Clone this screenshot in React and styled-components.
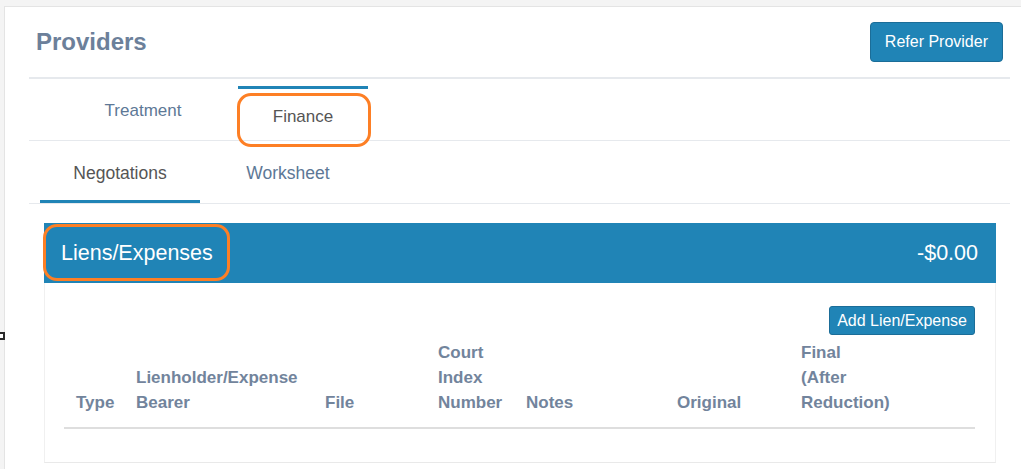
import React from "react";
import styled, { createGlobalStyle, css } from "styled-components";

const GlobalStyle = createGlobalStyle`
  html, body {
    margin: 0;
    padding: 0;
    background: #f4f4f4;
    font-family: "Liberation Sans", Arial, sans-serif;
  }
  * { box-sizing: border-box; }
`;

const Page = styled.div`
  position: relative;
  width: 1021px;
  height: 469px;
  overflow: hidden;
  padding: 6px 0 0 4px;
`;

const Panel = styled.div`
  background: #ffffff;
  border-left: 1px solid #e4e4e4;
  border-top: 1px solid #e4e4e4;
  height: 463px;
`;

const Container = styled.div`
  margin-left: 24px;
  width: 981px;
`;

const Header = styled.div`
  height: 72px;
  display: flex;
  align-items: center;
  justify-content: space-between;
  padding: 0 7px;
  border-bottom: 2px solid #e6e9ed;
`;

const Title = styled.h2`
  margin: 0;
  font-size: 24px;
  font-weight: 700;
  color: #6c809a;
`;

const PrimaryButton = styled.button`
  font-family: inherit;
  color: #ffffff;
  background: #2084b6;
  border: 1px solid #1b6d98;
  border-radius: ${(p) => (p.$small ? "3px" : "4px")};
  font-size: 16px;
  height: ${(p) => (p.$small ? "29px" : "40px")};
  padding: ${(p) => (p.$small ? "0 7px" : "0 14px")};
  cursor: pointer;
  line-height: 1;
`;

const TopTabs = styled.div`
  height: 62px;
  display: flex;
  gap: 30px;
  padding-left: 49px;
  border-bottom: 1px solid #e6e9ed;
`;

const TopTab = styled.div`
  position: relative;
  width: 130px;
  display: flex;
  align-items: center;
  justify-content: center;
  font-size: 17px;
  padding-top: 2px;
  color: #5d7896;
  ${(p) =>
    p.$active &&
    css`
      margin-top: 7px;
      border-top: 3px solid #2084b6;
      color: #555555;
      padding-top: 4px;
    `}
`;

const SubTabs = styled.div`
  height: 63px;
  display: flex;
  gap: 8px;
  padding-left: 11px;
  border-bottom: 1px solid #e6e9ed;
`;

const SubTab = styled.div`
  width: 160px;
  display: flex;
  align-items: center;
  justify-content: center;
  padding-top: 5px;
  font-size: 17.5px;
  color: ${(p) => (p.$active ? "#555555" : "#5d7896")};
  border-bottom: 3px solid ${(p) => (p.$active ? "#2084b6" : "transparent")};
`;

const Section = styled.div`
  margin: 19px 14px 0 15px;
`;

const SectionBar = styled.div`
  position: relative;
  height: 60px;
  background: #2084b6;
  color: #ffffff;
  display: flex;
  align-items: center;
  justify-content: space-between;
  padding: 0 18px 0 17px;
  font-size: 21.5px;
`;

const Card = styled.div`
  border: 1px solid #f0f0f0;
  border-top: none;
  border-bottom: 1px solid #e9e9e9;
  padding: 23px 20px 33px 19px;
`;

const Toolbar = styled.div`
  display: flex;
  justify-content: flex-end;
`;

const HeaderRow = styled.div`
  margin-top: 5px;
  display: grid;
  grid-template-columns: 60px 189px 113px 88px 151px 124px 1fr;
  align-items: end;
  padding: 0 0 12px 12px;
  border-bottom: 2px solid #dedede;
`;

const HeadCell = styled.div`
  font-size: 17px;
  font-weight: 700;
  line-height: 25px;
  color: #72849c;
`;

const Annotation = styled.div`
  position: absolute;
  border: 3.5px solid #fd7f25;
  border-radius: 14px;
  pointer-events: none;
`;

const EdgeBox = styled.div`
  position: absolute;
  left: -3px;
  top: 332px;
  width: 8px;
  height: 8px;
  border: 2px solid #2a2a2a;
  background: #ffffff;
`;

export default function App() {
  return (
    <>
      <GlobalStyle />
      <Page>
        <Panel>
          <Container>
            <Header>
              <Title>Providers</Title>
              <PrimaryButton>Refer Provider</PrimaryButton>
            </Header>
            <TopTabs>
              <TopTab>Treatment</TopTab>
              <TopTab $active>
                Finance
                <Annotation style={{ left: -1, top: 4, width: 134, height: 54 }} />
              </TopTab>
            </TopTabs>
            <SubTabs>
              <SubTab $active>Negotations</SubTab>
              <SubTab>Worksheet</SubTab>
            </SubTabs>
            <Section>
              <SectionBar>
                <span>Liens/Expenses</span>
                <span>-$0.00</span>
                <Annotation style={{ left: -1, top: 1, width: 187, height: 57 }} />
              </SectionBar>
              <Card>
                <Toolbar>
                  <PrimaryButton $small>Add Lien/Expense</PrimaryButton>
                </Toolbar>
                <HeaderRow>
                  <HeadCell>Type</HeadCell>
                  <HeadCell>
                    Lienholder/Expense
                    <br />
                    Bearer
                  </HeadCell>
                  <HeadCell>File</HeadCell>
                  <HeadCell>
                    Court
                    <br />
                    Index
                    <br />
                    Number
                  </HeadCell>
                  <HeadCell>Notes</HeadCell>
                  <HeadCell>Original</HeadCell>
                  <HeadCell>
                    Final
                    <br />
                    (After
                    <br />
                    Reduction)
                  </HeadCell>
                </HeaderRow>
              </Card>
            </Section>
          </Container>
        </Panel>
        <EdgeBox />
      </Page>
    </>
  );
}
